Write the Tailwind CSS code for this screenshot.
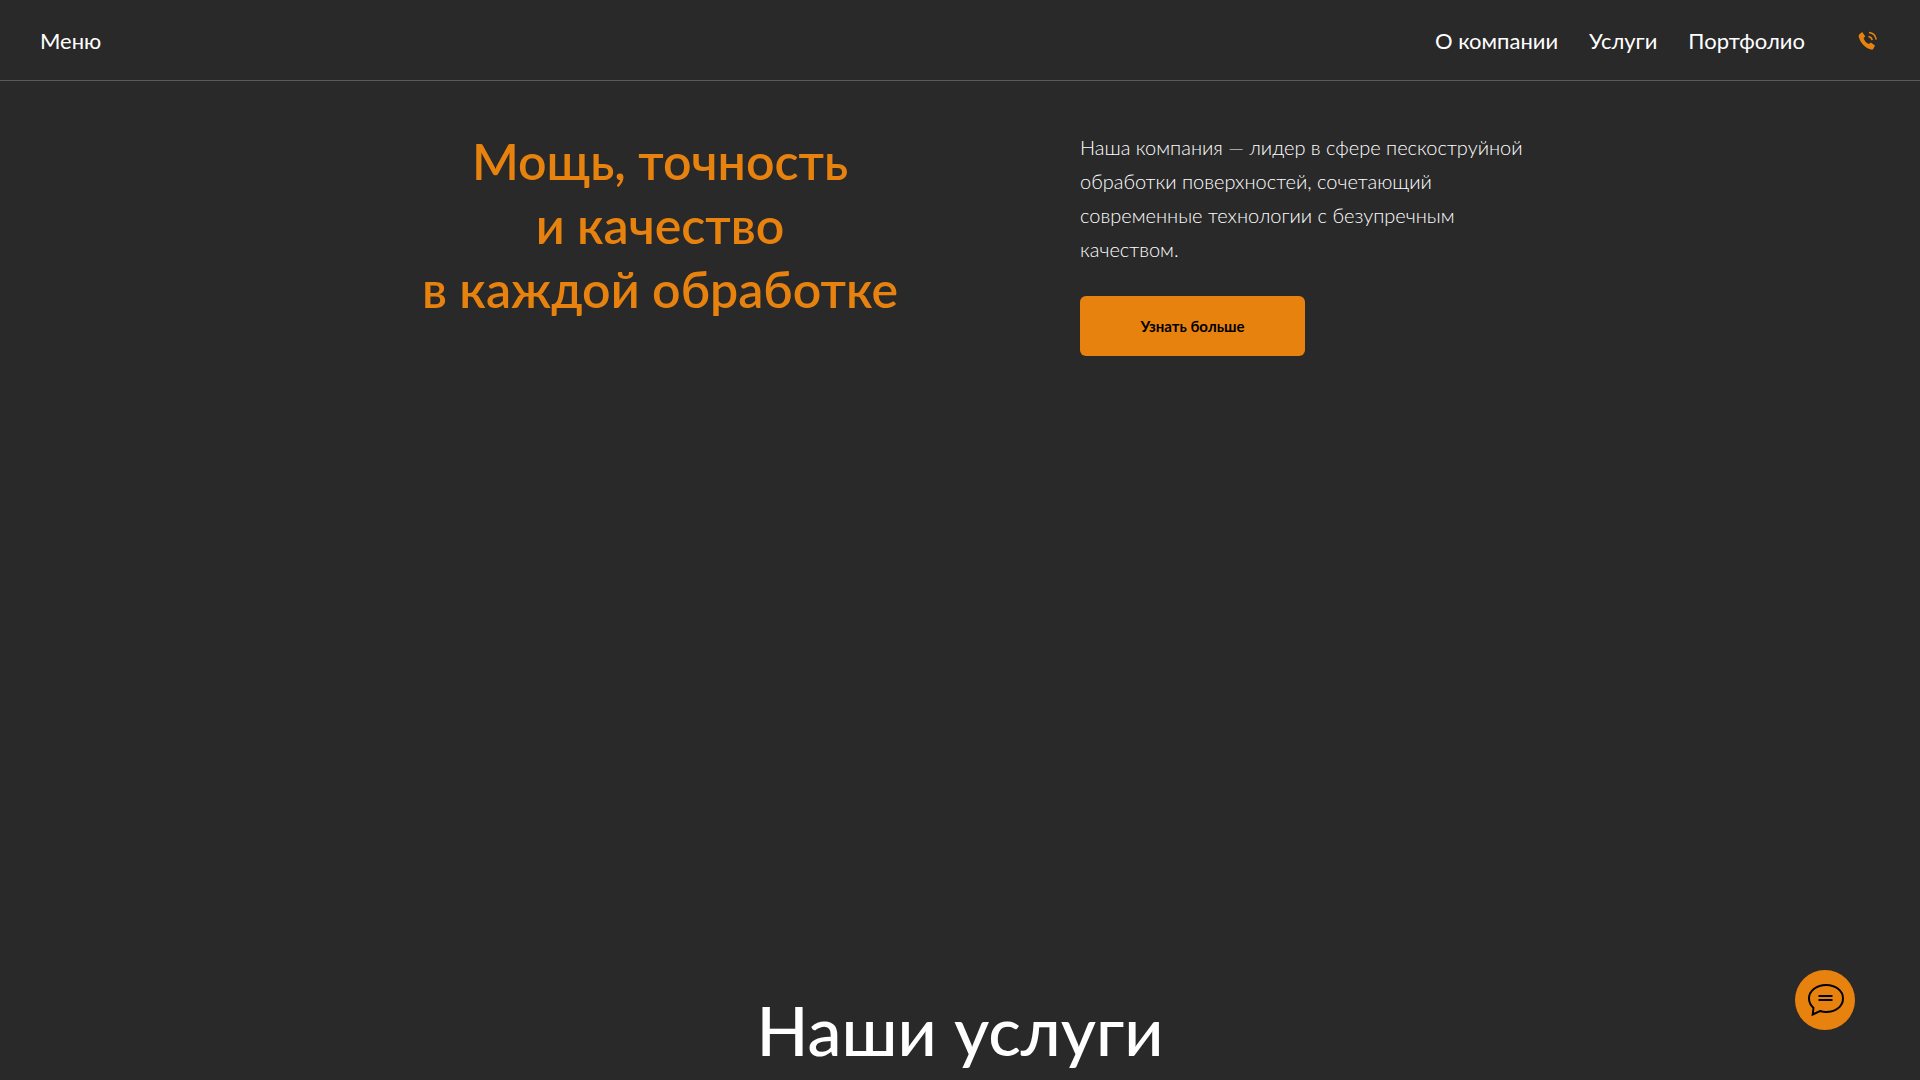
<!doctype html>
<html lang="ru"><head><meta charset="utf-8"><script src="https://cdn.jsdelivr.net/npm/@tailwindcss/browser@4"></script></head>
<body class="bg-[#292929] font-['Lato',sans-serif] overflow-hidden h-[1080px]">
<header class="h-[81px] border-b border-[#5a5a5a] flex items-center justify-between pl-10 pr-[42px] text-white text-[22px]">
<span>Меню</span>
<nav class="flex items-center gap-[31px]"><span>О компании</span><span>Услуги</span><span>Портфолио</span>
<svg class="ml-[22px] mt-px" width="20" height="20" viewBox="0 0 20 20" fill="none"><path fill="#e8820f" d="M1.200 3.600 4.200 1l3 4.200-1.600 2c.8 2.600 2.600 4.700 5.200 5.800l2-1.400 4.200 3-1.600 3.200c-.5.8-1.400 1.100-2.400.8C6.800 16.700 2.400 11.600.9 6.200c-.3-1-.3-1.900.3-2.600Z"/><path stroke="#e8820f" stroke-width="1.500" d="M10.500 5.500c1.800.3 3.300 1.700 3.700 3.600M11 1.500c3.800.4 6.700 3.300 7.200 7.200"/></svg></nav>
</header>
<main class="flex pt-[48px] h-[872px]">
<div class="ml-[396px] w-[528px] text-center text-[#e8820f] text-[50px] leading-[64px] font-semibold">Мощь, точность<br>и качество<br>в каждой обработке</div>
<div class="ml-[156px] pt-px text-white font-light text-xl leading-[34px]"><p>Наша компания — лидер в сфере пескоструйной<br>обработки поверхностей, сочетающий<br>современные технологии с безупречным<br>качеством.</p>
<button class="mt-[30px] w-[225px] h-[60px] pb-px rounded-md bg-[#e8820f] text-black text-[15px] font-bold">Узнать больше</button></div>
</main>
<h2 class="text-center text-white text-[68px] leading-none font-medium mt-[43px]">Наши услуги</h2>
<button class="fixed right-[65px] bottom-[50px] w-[60px] h-[60px] rounded-full bg-[#e8820f]"><svg width="60" height="60" viewBox="0 0 60 60" fill="none" stroke="#000" stroke-width="2"><path d="M31 15c-9 0-17 5.500-17 13.500 0 4 1.800 7 4.500 9.500l-.8 6.500 7.300-3.500c2 .6 4 1 6 1 9.500 0 17-5.500 17-13.500S40.500 15 31 15Z"/><path d="M23.500 26h14M23.500 30h14"/></svg></button>
</body></html>
